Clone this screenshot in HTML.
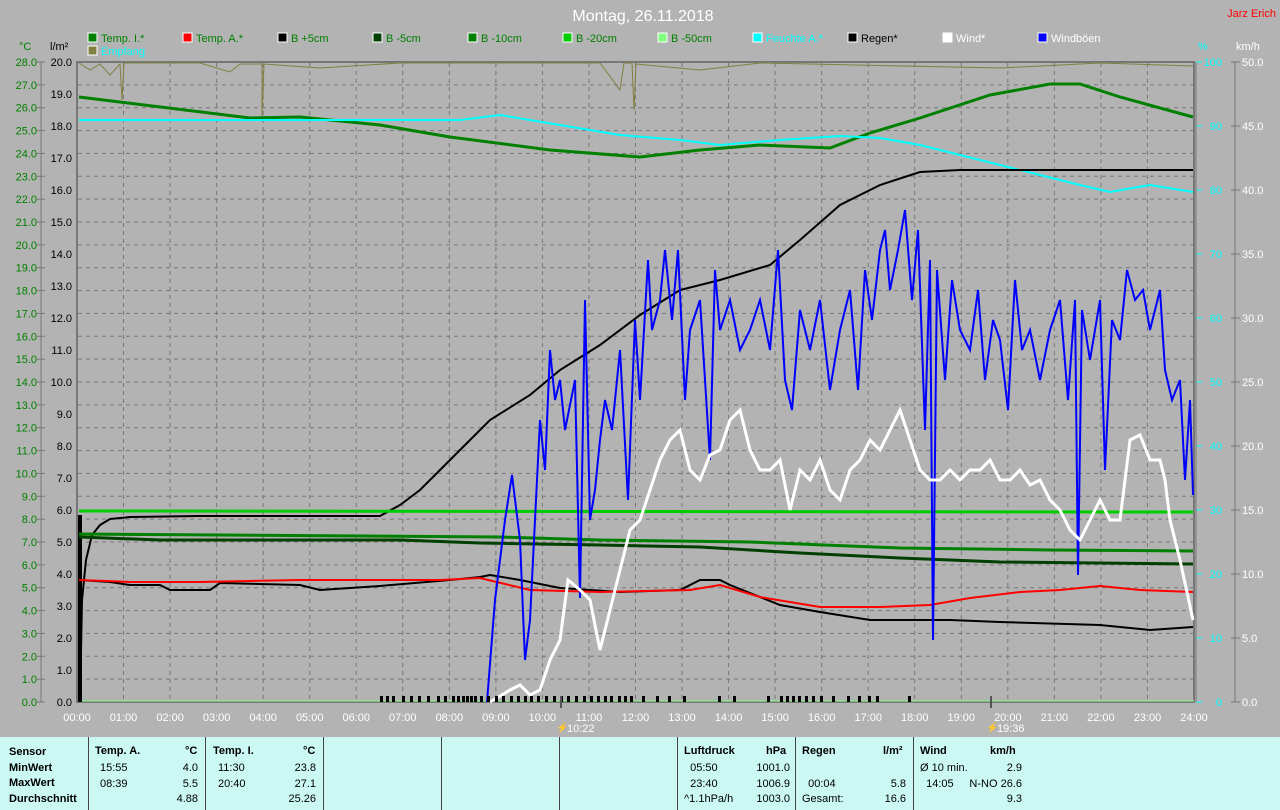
<!DOCTYPE html>
<html><head><meta charset="utf-8"><style>
body{margin:0;width:1280px;height:810px;background:#b3b3b3;overflow:hidden;font-family:"Liberation Sans",sans-serif}
svg{position:absolute;left:0;top:0}
.tb{position:absolute;left:0;top:737px;width:1280px;height:73px;background:#ccf8f4;font-size:11px;color:#000}
.tb div{position:absolute}
.b{font-weight:bold}
.vl{position:absolute;top:0;width:1px;height:73px;background:#444}
</style></head><body>
<svg width="1280" height="737" xmlns="http://www.w3.org/2000/svg" font-family="Liberation Sans, sans-serif">
<rect width="1280" height="737" fill="#b3b3b3"/>
<text x="643" y="21" font-size="16" fill="#fff" text-anchor="middle">Montag, 26.11.2018</text>
<text x="1276" y="17" font-size="11" fill="#f00" text-anchor="end">Jarz Erich</text>
<g font-size="11">
<rect x="88" y="33" width="9" height="9" fill="#008000" stroke="#fff"/><text x="101" y="42" fill="#008000">Temp. I.*</text>
<rect x="183" y="33" width="9" height="9" fill="#f00" stroke="#fff"/><text x="196" y="42" fill="#008000">Temp. A.*</text>
<rect x="278" y="33" width="9" height="9" fill="#000" stroke="#fff"/><text x="291" y="42" fill="#008000">B +5cm</text>
<rect x="373" y="33" width="9" height="9" fill="#004000" stroke="#fff"/><text x="386" y="42" fill="#008000">B -5cm</text>
<rect x="468" y="33" width="9" height="9" fill="#008000" stroke="#fff"/><text x="481" y="42" fill="#008000">B -10cm</text>
<rect x="563" y="33" width="9" height="9" fill="#0c0" stroke="#fff"/><text x="576" y="42" fill="#008000">B -20cm</text>
<rect x="658" y="33" width="9" height="9" fill="#80ff80" stroke="#fff"/><text x="671" y="42" fill="#008000">B -50cm</text>
<rect x="753" y="33" width="9" height="9" fill="#0ff" stroke="#fff"/><text x="766" y="42" fill="#0ff">Feuchte A.*</text>
<rect x="848" y="33" width="9" height="9" fill="#000" stroke="#fff"/><text x="861" y="42" fill="#000">Regen*</text>
<rect x="943" y="33" width="9" height="9" fill="#fff" stroke="#fff"/><text x="956" y="42" fill="#fff">Wind*</text>
<rect x="1038" y="33" width="9" height="9" fill="#00f" stroke="#fff"/><text x="1051" y="42" fill="#fff">Windböen</text>
<rect x="88" y="46" width="9" height="9" fill="#808040" stroke="#fff"/><text x="101" y="55" fill="#0ff">Empfang</text>
<text x="19" y="50" fill="#008000">°C</text><text x="50" y="50" fill="#000">l/m²</text>
<text x="1198" y="50" fill="#0ff">%</text><text x="1236" y="50" fill="#fff">km/h</text>
</g>
<line x1="41" y1="62" x2="41" y2="702" stroke="#777"/>
<line x1="1235" y1="62" x2="1235" y2="702" stroke="#777"/>
<g id="grid" stroke="#777" stroke-dasharray="4,4" stroke-width="1"></g>
<g id="lbl" font-size="11"></g>
<rect x="77" y="62" width="1117" height="640" fill="none" stroke="#777" stroke-width="2"/>
<line x1="1196" y1="62" x2="1196" y2="702" stroke="#777"/>
<line x1="78" y1="701" x2="1194" y2="701" stroke="#80ff80"/>
<polyline fill="none" stroke="#808040" points="79,63 90,70 100,64 110,75 120,64 122,100 124,63 200,63 230,72 240,64 262,64 262,118 264,64 320,68 400,63 600,63 620,90 624,63 632,63 634,110 636,64 700,70 760,63 1000,68 1100,63 1193,66"/>
<polyline fill="none" stroke="#008000" stroke-width="3" points="79,97 250,118 300,117 380,125 450,137 550,150 640,157 700,150 760,145 830,148 870,133 920,118 990,95 1050,84 1080,84 1120,97 1193,117"/>
<polyline fill="none" stroke="#0ff" stroke-width="2" points="79,120 460,120 500,115 560,125 620,135 680,140 720,145 780,140 840,136 880,138 920,145 960,155 1000,165 1040,175 1080,185 1110,192 1150,185 1193,192"/>
<polyline fill="none" stroke="#000" stroke-width="2" points="80,702 82,600 86,560 92,535 100,525 110,519 130,517 200,516 380,516 400,505 420,490 440,470 460,450 490,420 530,395 560,370 600,345 640,315 680,290 720,280 770,265 800,240 840,205 880,185 920,172 960,170 1193,170"/>
<rect x="78" y="515" width="4" height="187" fill="#000"/>
<polyline fill="none" stroke="#0c0" stroke-width="3" points="79,511 1193,512"/>
<polyline fill="none" stroke="#008000" stroke-width="3" points="79,534 500,537 600,540 750,542 900,548 1050,550 1193,551"/>
<polyline fill="none" stroke="#004000" stroke-width="3" points="79,537 160,540 400,540 480,543 600,545 700,547 800,553 900,558 1000,562 1193,564"/>
<polyline fill="none" stroke="#000" stroke-width="2" points="79,580 110,582 130,585 160,585 170,590 210,590 220,583 300,585 320,590 380,586 450,580 480,577 490,575 520,580 560,588 620,592 680,590 700,580 720,580 730,585 780,605 820,612 870,620 950,620 1000,622 1100,625 1150,630 1193,627"/>
<polyline fill="none" stroke="#f00" stroke-width="2" points="79,580 130,582 200,582 300,580 440,580 480,578 530,590 600,592 690,590 720,585 760,597 820,607 880,607 930,605 970,598 1020,592 1060,590 1100,586 1140,590 1193,592"/>
<polyline fill="none" stroke="#00f" stroke-width="2" points="487,702 495,600 505,520 512,475 520,540 525,660 530,620 540,420 545,470 550,350 555,400 560,380 565,430 575,380 580,598 585,300 590,520 595,490 600,440 605,400 612,430 620,350 628,500 635,320 640,400 648,260 652,330 660,300 665,250 672,320 678,250 685,400 690,330 700,300 710,460 715,270 720,330 730,300 740,350 750,330 760,300 770,350 778,250 785,380 792,410 800,310 810,350 820,300 830,390 840,330 850,290 858,390 865,270 872,320 880,250 885,230 890,290 898,250 905,210 912,300 918,230 925,430 930,260 933,640 937,270 945,380 952,280 960,330 970,350 978,290 985,380 993,320 1000,340 1008,410 1015,280 1022,350 1030,330 1040,380 1050,330 1060,300 1068,400 1075,300 1078,575 1082,310 1090,360 1100,300 1105,470 1112,320 1120,340 1127,270 1135,300 1143,290 1150,330 1160,290 1165,370 1172,400 1180,380 1185,480 1190,400 1193,495"/>
<polyline fill="none" stroke="#fff" stroke-width="3" points="490,702 510,690 520,685 530,695 540,690 550,660 560,640 568,580 580,590 590,600 600,650 610,610 620,570 630,530 640,520 650,490 660,460 670,440 680,430 690,470 700,480 710,455 720,450 730,420 740,410 750,450 760,470 770,470 780,460 790,510 800,470 810,480 820,460 830,490 840,500 850,470 860,460 870,440 880,450 890,430 900,410 910,440 920,470 930,480 940,480 950,470 960,480 970,470 980,470 990,460 1000,480 1010,480 1020,470 1030,485 1040,480 1050,500 1060,510 1070,530 1080,540 1090,520 1100,500 1110,520 1120,520 1130,440 1140,435 1150,460 1160,460 1165,480 1170,520 1180,560 1193,620"/>
<g id="rain" fill="#000"></g>
<line x1="561" y1="696" x2="561" y2="708" stroke="#555" stroke-width="2"/>
<line x1="991" y1="696" x2="991" y2="708" stroke="#555" stroke-width="2"/>
<text x="567" y="732" font-size="11" fill="#fff">10:22</text><text x="556" y="731" font-size="10" fill="#ff0">⚡</text>
<text x="997" y="732" font-size="11" fill="#fff">19:36</text><text x="986" y="731" font-size="10" fill="#ff0">⚡</text>
</svg>
<div class="tb">
<div class="vl" style="left:88px"></div><div class="vl" style="left:205px"></div><div class="vl" style="left:323px"></div><div class="vl" style="left:441px"></div><div class="vl" style="left:559px"></div><div class="vl" style="left:677px"></div><div class="vl" style="left:795px"></div><div class="vl" style="left:913px"></div>
<div class="b" style="left:9px;top:8px;line-height:15.5px">Sensor<br>MinWert<br>MaxWert<br>Durchschnitt</div>
<div class="b" style="left:95px;top:8px">Temp. A.</div><div class="b" style="left:185px;top:8px">°C</div>
<div style="left:100px;top:24px;line-height:15.5px">15:55<br>08:39</div>
<div style="left:160px;top:24px;width:38px;text-align:right;line-height:15.5px">4.0<br>5.5<br>4.88</div>
<div class="b" style="left:213px;top:8px">Temp. I.</div><div class="b" style="left:303px;top:8px">°C</div>
<div style="left:218px;top:24px;line-height:15.5px">11:30<br>20:40</div>
<div style="left:276px;top:24px;width:40px;text-align:right;line-height:15.5px">23.8<br>27.1<br>25.26</div>
<div class="b" style="left:684px;top:8px">Luftdruck</div><div class="b" style="left:766px;top:8px">hPa</div>
<div style="left:684px;top:24px;line-height:15.5px">&nbsp; 05:50<br>&nbsp; 23:40<br>^1.1hPa/h</div>
<div style="left:745px;top:24px;width:45px;text-align:right;line-height:15.5px">1001.0<br>1006.9<br>1003.0</div>
<div class="b" style="left:802px;top:8px">Regen</div><div class="b" style="left:883px;top:8px">l/m²</div>
<div style="left:802px;top:24px;line-height:15.5px"><br>&nbsp; 00:04<br>Gesamt:</div>
<div style="left:866px;top:24px;width:40px;text-align:right;line-height:15.5px"><br>5.8<br>16.6</div>
<div class="b" style="left:920px;top:8px">Wind</div><div class="b" style="left:990px;top:8px">km/h</div>
<div style="left:920px;top:24px;line-height:15.5px">Ø 10 min.<br>&nbsp; 14:05</div>
<div style="left:950px;top:24px;width:72px;text-align:right;line-height:15.5px">2.9<br>N-NO 26.6<br>9.3</div>
</div>
<script>
var g=document.getElementById('grid'),l=document.getElementById('lbl'),r=document.getElementById('rain'),ns='http://www.w3.org/2000/svg',s='';
for(var i=1;i<28;i++){var y=62+i*640/28;s+='<line x1="78" y1="'+y+'" x2="1193" y2="'+y+'"/>';}
for(var h=1;h<24;h++){var x=77+h*1117/24;s+='<line x1="'+x+'" y1="63" x2="'+x+'" y2="701"/>';}
g.innerHTML=s;s='';
for(var i=0;i<=28;i++){var y=62+(28-i)*640/28;
s+='<text x="37" y="'+(y+4)+'" fill="#008000" text-anchor="end">'+i.toFixed(1)+'</text><line x1="37" y1="'+y+'" x2="45" y2="'+y+'" stroke="#777"/>';
if(i<=20){var yy=702-i*32;s+='<text x="72" y="'+(yy+4)+'" fill="#000" text-anchor="end">'+i.toFixed(1)+'</text>';}}
for(var p=0;p<=100;p+=10){var y=702-p*6.4;s+='<text x="1222" y="'+(y+4)+'" fill="#0ff" text-anchor="end">'+p+'</text><line x1="1196" y1="'+y+'" x2="1202" y2="'+y+'" stroke="#0ff"/>';}
for(var v=0;v<=50;v+=5){var y=702-v*12.8;s+='<text x="1242" y="'+(y+4)+'" fill="#fff">'+v.toFixed(1)+'</text><line x1="1231" y1="'+y+'" x2="1240" y2="'+y+'" stroke="#777"/>';}
for(var h=0;h<=24;h++){var x=77+h*1117/24;s+='<text x="'+x+'" y="721" fill="#fff" text-anchor="middle">'+(h<10?'0':'')+h+':00</text>';}
l.innerHTML=s;s='';
var xs=[380,386,392,402,410,418,427,437,444,452,457,462,466,470,474,480,487,495,502,510,517,524,530,537,545,553,560,567,575,583,590,597,604,610,618,624,630,642,656,668,683,718,733,767,780,786,792,798,805,812,820,832,847,858,868,876,908];
xs.forEach(function(x){s+='<rect x="'+x+'" y="696" width="3" height="6"/>';});r.innerHTML=s;
</script>
</body></html>
